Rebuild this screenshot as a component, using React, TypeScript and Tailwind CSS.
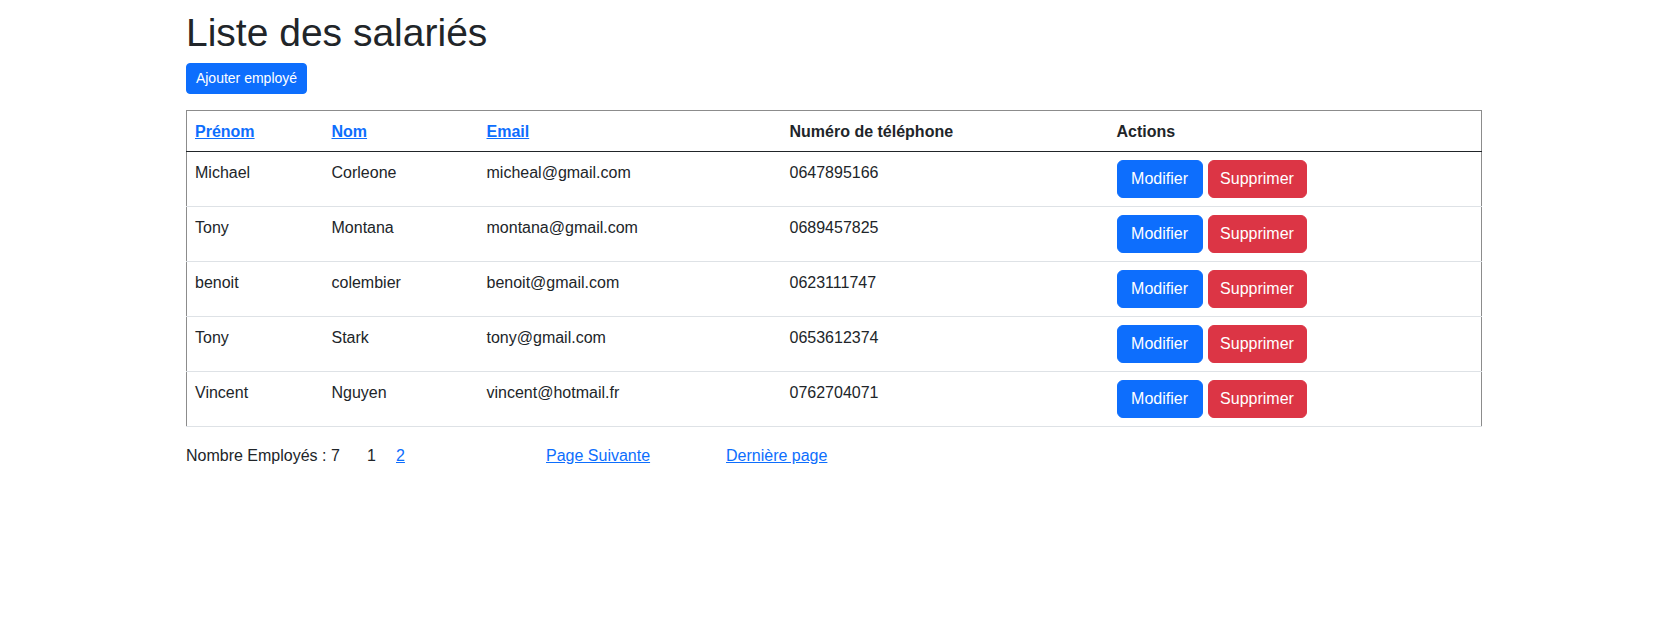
import React from "react";

type Emp = { prenom: string; nom: string; email: string; tel: string };

const employes: Emp[] = [
  { prenom: "Michael", nom: "Corleone", email: "micheal@gmail.com", tel: "0647895166" },
  { prenom: "Tony", nom: "Montana", email: "montana@gmail.com", tel: "0689457825" },
  { prenom: "benoit", nom: "colembier", email: "benoit@gmail.com", tel: "0623111747" },
  { prenom: "Tony", nom: "Stark", email: "tony@gmail.com", tel: "0653612374" },
  { prenom: "Vincent", nom: "Nguyen", email: "vincent@hotmail.fr", tel: "0762704071" },
];

export default function App() {
  return (
    <div className="min-h-screen bg-white pl-[186px] text-[16px] leading-[24px] text-[#212529] [font-family:'Liberation_Sans',Arial,sans-serif]">
      <div className="w-[1296px]">
        <h1 className="mt-[9px] mb-[6px] text-[39px] font-medium leading-[48px]">Liste des salariés</h1>
        <button className="flex h-[31px] w-[121px] items-center justify-center rounded-[4px] border border-[#0d6efd] bg-[#0d6efd] text-[14px] leading-[21px] text-white">
          Ajouter employé
        </button>

        <table className="mt-[16px] w-[1296px] table-fixed border-collapse border-x border-t border-x-[#8c8c8c] border-t-[#8c8c8c]">
          <thead>
            <tr className="border-b border-b-[#212529]">
              <th className="w-[137px] px-2 pt-[9px] pb-[7px] text-left font-bold">
                <a href="#" className="text-[#0d6efd] underline">Prénom</a>
              </th>
              <th className="w-[155px] px-2 pt-[9px] pb-[7px] text-left font-bold">
                <a href="#" className="text-[#0d6efd] underline">Nom</a>
              </th>
              <th className="w-[303px] px-2 pt-[9px] pb-[7px] text-left font-bold">
                <a href="#" className="text-[#0d6efd] underline">Email</a>
              </th>
              <th className="w-[327px] px-2 pt-[9px] pb-[7px] text-left font-bold">Numéro de téléphone</th>
              <th className="px-2 pt-[9px] pb-[7px] text-left font-bold">Actions</th>
            </tr>
          </thead>
          <tbody>
            {employes.map((e, i) => (
              <tr key={i} className="border-b border-b-[#dee2e6] align-top">
                <td className="px-2 pt-[9px] pb-[7px]">{e.prenom}</td>
                <td className="px-2 pt-[9px] pb-[7px]">{e.nom}</td>
                <td className="px-2 pt-[9px] pb-[7px]">{e.email}</td>
                <td className="px-2 pt-[9px] pb-[7px]">{e.tel}</td>
                <td className="px-2 py-2">
                  <div className="flex gap-[5px]">
                    <button className="flex h-[38px] w-[86px] items-center justify-center rounded-[6px] border border-[#0d6efd] bg-[#0d6efd] text-white">
                      Modifier
                    </button>
                    <button className="flex h-[38px] w-[99px] items-center justify-center rounded-[6px] border border-[#dc3545] bg-[#dc3545] text-white">
                      Supprimer
                    </button>
                  </div>
                </td>
              </tr>
            ))}
          </tbody>
        </table>

        <div className="mt-[17px] flex">
          <span className="w-[181px]">Nombre Employés : 7</span>
          <span className="w-[29px]">1</span>
          <a href="#" className="w-[150px] text-[#0d6efd] underline">
            <span>2</span>
          </a>
          <a href="#" className="w-[180px] text-[#0d6efd] underline">
            <span>Page Suivante</span>
          </a>
          <a href="#" className="text-[#0d6efd] underline">Dernière page</a>
        </div>
      </div>
    </div>
  );
}
